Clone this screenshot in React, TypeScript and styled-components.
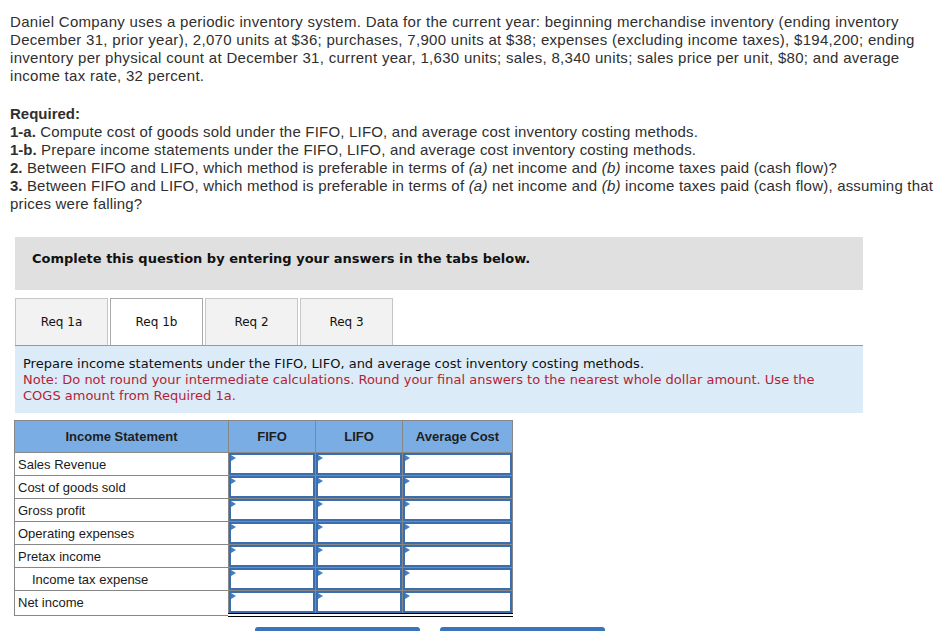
import React from "react";
import styled, { createGlobalStyle } from "styled-components";

const GlobalStyle = createGlobalStyle`
  html, body {
    margin: 0;
    padding: 0;
    background: #ffffff;
    overflow-x: hidden;
  }
`;

const introLines = [
  "Daniel Company uses a periodic inventory system. Data for the current year: beginning merchandise inventory (ending inventory",
  "December 31, prior year), 2,070 units at $36; purchases, 7,900 units at $38; expenses (excluding income taxes), $194,200; ending",
  "inventory per physical count at December 31, current year, 1,630 units; sales, 8,340 units; sales price per unit, $80; and average",
  "income tax rate, 32 percent."
];

const rows = [
  { label: "Sales Revenue", indent: false },
  { label: "Cost of goods sold", indent: false },
  { label: "Gross profit", indent: false },
  { label: "Operating expenses", indent: false },
  { label: "Pretax income", indent: false },
  { label: "Income tax expense", indent: true },
  { label: "Net income", indent: false }
];

const tabs = ["Req 1a", "Req 1b", "Req 2", "Req 3"];

export default function App() {
  return (
    <Page>
      <GlobalStyle />
      <Intro>
        {introLines.map(line => (
          <IntroLine key={line}>{line}</IntroLine>
        ))}
      </Intro>
      <Required>
        <ReqTitle>Required:</ReqTitle>
        <ReqItem>
          <strong>1-a.</strong> Compute cost of goods sold under the FIFO, LIFO, and average cost
          inventory costing methods.
        </ReqItem>
        <ReqItem>
          <strong>1-b.</strong> Prepare income statements under the FIFO, LIFO, and average cost
          inventory costing methods.
        </ReqItem>
        <ReqItem>
          <strong>2.</strong> Between FIFO and LIFO, which method is preferable in terms of{" "}
          <em>(a)</em> net income and <em>(b)</em> income taxes paid (cash flow)?
        </ReqItem>
        <ReqItem>
          <strong>3.</strong> Between FIFO and LIFO, which method is preferable in terms of{" "}
          <em>(a)</em> net income and <em>(b)</em> income taxes paid (cash flow), assuming that
          prices were falling?
        </ReqItem>
      </Required>

      <Panel>
        <Banner>Complete this question by entering your answers in the tabs below.</Banner>

        <TabRow>
          {tabs.map(t => (
            <Tab key={t} active={t === "Req 1b"}>
              {t}
            </Tab>
          ))}
        </TabRow>

        <Instructions>
          Prepare income statements under the FIFO, LIFO, and average cost inventory costing
          methods.
          <Note>
            Note: Do not round your intermediate calculations. Round your final answers to the
            nearest whole dollar amount. Use the COGS amount from Required 1a.
          </Note>
        </Instructions>

        <Statement>
          <thead>
            <tr>
              <HeadCell style={{ width: 213 }}>Income Statement</HeadCell>
              <HeadCell style={{ width: 86 }}>FIFO</HeadCell>
              <HeadCell style={{ width: 86 }}>LIFO</HeadCell>
              <HeadCell>Average Cost</HeadCell>
            </tr>
          </thead>
          <tbody>
            {rows.map((r, i) => (
              <tr key={r.label}>
                <LabelCell indent={r.indent}>{r.label}</LabelCell>
                {[0, 1, 2].map(c => (
                  <InputCell key={c} last={i === rows.length - 1}>
                    <Field>
                      <Marker />
                      <Entry type="text" aria-label={r.label} />
                    </Field>
                  </InputCell>
                ))}
              </tr>
            ))}
          </tbody>
        </Statement>

        <NavRow>
          <NavButton />
          <NavButton />
        </NavRow>
      </Panel>
    </Page>
  );
}

const Page = styled.div`
  padding: 13px 0 0 10px;
  color: #2f2f2f;
  font-family: "Liberation Sans", Arial, sans-serif;
`;

const Intro = styled.div`
  font-size: 15px;
  line-height: 18px;
  letter-spacing: 0.3px;
`;

const IntroLine = styled.div`
  white-space: nowrap;
`;

const Required = styled.div`
  margin-top: 20px;
  width: 932px;
  font-size: 15px;
  line-height: 18px;
  letter-spacing: 0.2px;
`;

const ReqTitle = styled.div`
  font-weight: 700;
  letter-spacing: 0;
`;

const ReqItem = styled.div`
  strong {
    font-weight: 700;
    letter-spacing: 0;
  }
`;

const Panel = styled.div`
  margin: 24px 0 0 5px;
  width: 848px;
`;

const Banner = styled.div`
  height: 53px;
  box-sizing: border-box;
  padding: 14px 17px 0;
  background: #e0e0e0;
  color: #111;
  font-family: "DejaVu Sans", Verdana, sans-serif;
  font-size: 13px;
  font-weight: 700;
`;

const TabRow = styled.div`
  display: flex;
  gap: 2px;
  margin-top: 8px;
`;

const Tab = styled.div<{ active?: boolean }>`
  width: 93px;
  height: 47px;
  box-sizing: border-box;
  display: flex;
  align-items: center;
  justify-content: center;
  border: 1px solid ${p => (p.active ? "#a9a9a9" : "#c6c6c6")};
  border-bottom: none;
  background: ${p => (p.active ? "#ffffff" : "#f2f2f2")};
  color: #111;
  font-family: "DejaVu Sans", Verdana, sans-serif;
  font-size: 12px;
`;

const Instructions = styled.div`
  border-top: 1px solid #9a9a9a;
  background: #dbebf8;
  padding: 10px 8px 9px;
  color: #111;
  font-family: "DejaVu Sans", Verdana, sans-serif;
  font-size: 13px;
  line-height: 16px;
`;

const Note = styled.div`
  color: #b51f35;
`;

const Statement = styled.table`
  margin: 7px 0 0 -1px;
  width: 499px;
  border-collapse: collapse;
  table-layout: fixed;
  font-family: "Liberation Sans", Arial, sans-serif;
`;

const HeadCell = styled.th`
  height: 31px;
  padding: 0;
  background: #7aade3;
  border: 1px solid #878787;
  color: #1e1e1e;
  font-size: 13px;
  font-weight: 700;
  text-align: center;
`;

const LabelCell = styled.td<{ indent?: boolean }>`
  height: 22px;
  padding: 0 0 0 ${p => (p.indent ? "17px" : "3px")};
  border: 1px solid #878787;
  color: #1a1a1a;
  font-size: 13px;
  white-space: nowrap;
`;

const InputCell = styled.td<{ last?: boolean }>`
  padding: 0;
  border: 1px solid #878787;
  border-bottom: ${p => (p.last ? "4px double #000" : "1px solid #878787")};
`;

const Field = styled.div`
  position: relative;
  height: 22px;
`;

const Marker = styled.span`
  position: absolute;
  top: 2px;
  left: 2px;
  width: 0;
  height: 0;
  border-top: 3px solid transparent;
  border-bottom: 3px solid transparent;
  border-left: 5px solid #3f7fc6;
`;

const Entry = styled.input`
  display: block;
  width: 100%;
  height: 22px;
  box-sizing: border-box;
  margin: 0;
  padding: 0 4px;
  border: 2px solid #3b6eae;
  background: transparent;
  font-family: "Liberation Sans", Arial, sans-serif;
  font-size: 13px;
  outline: none;
`;

const NavRow = styled.div`
  display: flex;
  gap: 20px;
  margin: 10px 0 0 240px;
`;

const NavButton = styled.div`
  width: 165px;
  height: 34px;
  border-radius: 3px;
  background: #3a74b9;
`;
